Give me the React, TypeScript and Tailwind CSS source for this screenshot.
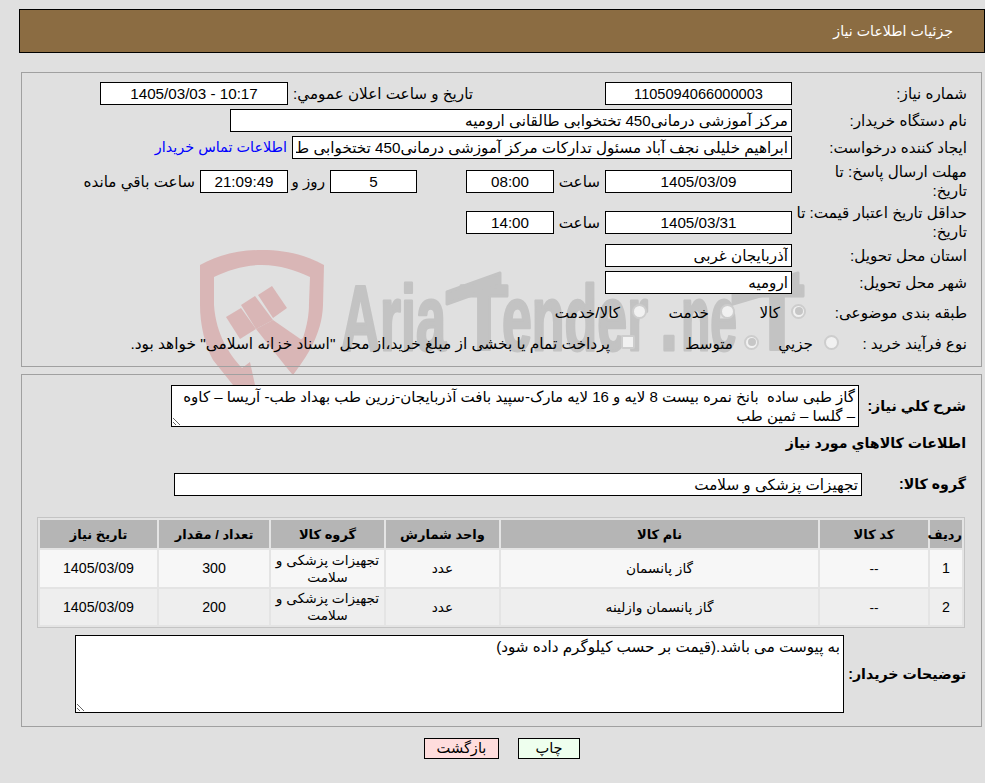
const inputBase =
  "h-[23px] shrink-0 border border-black bg-white px-[3px] text-[#000] outline-none";

function Box({ value, className }: { value: string; className: string }) {
  return <input readOnly dir="rtl" value={value} className={`${inputBase} ${className}`} />;
}

function Radio({ checked }: { checked?: boolean }) {
  return (
    <span className="mb-[2px] flex h-[15px] w-[15px] shrink-0 items-center justify-center rounded-full border-2 border-[#cdcdcd] bg-[#f1f1f1]">
      {checked && <span className="h-[8px] w-[8px] rounded-full bg-[#c6c6c6]" />}
    </span>
  );
}

// pieces of the wordmark: [text, x, width]
const wordmark: [string, number, number][] = [
  ["Aria", 341, 105],
  ["T", 460, 48],
  ["ender", 502, 146],
  [".", 660, 18],
  ["ne", 681, 56],
  ["T", 750, 54],
];

function Watermark() {
  return (
    <svg className="absolute left-0 top-0 z-0" width="985" height="783" viewBox="0 0 985 783">
      <g fill="#d9b6b6">
        <path d="M200 265 C220 254 240 250 262 250 C284 250 304 254 324 265 L323 305 C322 335 306 358 293 375 L278 355 L303 338 C307 325 309 315 309 303 L310 277 C295 270 280 265 262 265 C244 265 229 270 214 277 L214 305 C216 335 230 355 242 368 L250 362 L255 385 L233 385 L213 360 C205 345 200 325 200 305 Z" />
        <polygon points="226,317 241,308 256,329 240,339" />
        <polygon points="241,305 255,296 273,320 256,329" />
        <polygon points="258,295 272,286 287,308 273,318" />
        <polygon points="256,329 273,320 309,345 293,375 287,368" />
      </g>
      <g fill="#c3c3c3" stroke="#c3c3c3" strokeWidth="3" strokeLinejoin="round">
        {wordmark.map(([label, x, width]) => (
          <text
            key={x}
            x={x}
            y="350"
            direction="ltr"
            textLength={width}
            lengthAdjust="spacingAndGlyphs"
            fontFamily="'Liberation Sans', sans-serif"
            fontWeight="700"
            fontSize="92"
          >
            {label}
          </text>
        ))}
        <polygon points="447,292 500,273 500,285 447,304" />
        <polygon points="733,292 798,273 798,285 733,304" />
      </g>
    </svg>
  );
}

const rows = [
  { id: "1", name: "گاز پانسمان", qty: "300" },
  { id: "2", name: "گاز پانسمان وازلینه", qty: "200" },
];

export default function App() {
  return (
    <div
      dir="rtl"
      className="relative h-[783px] w-[985px] overflow-hidden bg-[#e0e0e0] text-[15.2px] leading-[19px] text-black [font-family:'Liberation_Sans','DejaVu_Sans',sans-serif]"
    >
      <Watermark />
      <div className="relative z-10">
        <div className="ml-[19px] mt-[9px] flex h-[44px] items-center border border-black bg-[#8b6c42] pr-[31px] text-[14.2px] text-white">
          جزئیات اطلاعات نیاز
        </div>

        <div className="ml-[21px] mr-[3px] mt-[19px] flex h-[295px] flex-col border border-[#a0a0a0] pr-[14px] pt-[9px]">
          <div className="flex h-[23px] items-center">
            <div className="w-[175px] shrink-0">شماره نیاز:</div>
            <Box value="1105094066000003" className="w-[187px] text-center text-[14.6px]" />
            <div className="mr-[132px] w-[185px] shrink-0">تاریخ و ساعت اعلان عمومي:</div>
            <Box value="10:17 - 1405/03/03" className="w-[188px] text-center" />
          </div>
          <div className="mt-[4px] flex h-[23px] items-center">
            <div className="w-[175px] shrink-0">نام دستگاه خریدار:</div>
            <Box value="مرکز آموزشی درمانی450 تختخوابی طالقانی ارومیه" className="w-[562px]" />
          </div>
          <div className="mt-[4px] flex h-[23px] items-center">
            <div className="w-[175px] shrink-0">ایجاد کننده درخواست:</div>
            <Box
              value="ابراهیم خلیلی نجف آباد مسئول تدارکات مرکز آموزشی درمانی450 تختخوابی طالقانی ارومیه"
              className="w-[500px]"
            />
            <a className="mr-[5px] whitespace-nowrap text-[14.4px] text-[#0000ff]">اطلاعات تماس خریدار</a>
          </div>
          <div className="mt-[3px] flex h-[38px] items-center">
            <div className="w-[175px] shrink-0 pl-[24px]">مهلت ارسال پاسخ: تا تاریخ:</div>
            <Box value="1405/03/09" className="w-[187px] text-center" />
            <div className="w-[51px] shrink-0 pr-[5px]">ساعت</div>
            <Box value="08:00" className="w-[88px] text-center" />
            <div className="w-[49px] shrink-0" />
            <Box value="5" className="w-[87px] text-center" />
            <div className="w-[42px] shrink-0 pr-[5px]">روز و</div>
            <Box value="21:09:49" className="w-[88px] bg-[#ffffee] text-center" />
            <div className="whitespace-nowrap pr-[5px]">ساعت باقي مانده</div>
          </div>
          <div className="mt-[3px] flex h-[38px] items-center">
            <div className="w-[175px] shrink-0">حداقل تاریخ اعتبار قیمت: تا تاریخ:</div>
            <Box value="1405/03/31" className="w-[187px] text-center" />
            <div className="w-[51px] shrink-0 pr-[5px]">ساعت</div>
            <Box value="14:00" className="w-[88px] text-center" />
          </div>
          <div className="mt-[3px] flex h-[23px] items-center">
            <div className="w-[175px] shrink-0">استان محل تحویل:</div>
            <Box value="آذربایجان غربی" className="w-[187px]" />
          </div>
          <div className="mt-[4px] flex h-[23px] items-center">
            <div className="w-[175px] shrink-0">شهر محل تحویل:</div>
            <Box value="ارومیه" className="w-[187px]" />
          </div>
          <div className="mt-[6px] flex h-[24px] items-center">
            <div className="w-[161px] shrink-0">طبقه بندی موضوعی:</div>
            <Radio checked />
            <div className="w-[56px] shrink-0 pr-[11px]">کالا</div>
            <Radio />
            <div className="w-[73px] shrink-0 pr-[11px]">خدمت</div>
            <Radio />
            <div className="whitespace-nowrap pr-[12px]">کالا/خدمت</div>
          </div>
          <div className="mt-[7px] flex h-[24px] items-center">
            <div className="w-[128px] shrink-0">نوع فرآیند خرید :</div>
            <Radio />
            <div className="w-[65px] shrink-0 pr-[11px]">جزيي</div>
            <Radio checked />
            <div className="w-[109px] shrink-0 pr-[11px]">متوسط</div>
            <span className="mb-[2px] h-[14px] w-[14px] shrink-0 rounded-[2px] border-2 border-[#cdcdcd] bg-[#f1f1f1]" />
            <div className="whitespace-nowrap pr-[11px] text-[15.4px]">
              پرداخت تمام يا بخشی از مبلغ خرید،از محل "اسناد خزانه اسلامی" خواهد بود.
            </div>
          </div>
        </div>

        <div className="ml-[21px] mr-[3px] mt-[7px] flex h-[353px] flex-col border border-[#a0a0a0] pr-[15px] pt-[10px]">
          <div className="flex items-center">
            <div className="w-[107px] shrink-0 text-[14.2px] font-bold">شرح کلي نیاز:</div>
            <textarea
              readOnly
              dir="rtl"
              className="h-[42px] w-[688px] resize border border-black bg-white px-[3px] py-[1px] text-[15px] outline-none"
              value="گاز طبی ساده  بانخ نمره بیست 8 لایه و 16 لایه مارک-سپید بافت آذربایجان-زرین طب بهداد طب- آریسا – کاوه – گلسا – ثمین طب"
            />
          </div>
          <div className="mt-[7px] h-[19px] text-[14.2px] font-bold">اطلاعات کالاهاي مورد نیاز</div>
          <div className="mt-[20px] flex h-[23px] items-center">
            <div className="w-[104px] shrink-0 text-[14.2px] font-bold">گروه کالا:</div>
            <Box value="تجهیزات پزشکی و سلامت" className="w-[688px]" />
          </div>
          <table className="ml-[15px] mr-0 mt-[21px] w-[928px] table-fixed border-separate border-spacing-[2px] self-end border border-[#c4c4c4] bg-[#e4e4e4] text-center text-[13.7px]">
            <thead>
              <tr className="h-[28px] bg-[#b5b5b5] text-[13px] font-bold">
                <th className="w-[32px] p-0">ردیف</th>
                <th className="w-[108px] p-0">کد کالا</th>
                <th className="w-[317px] p-0">نام کالا</th>
                <th className="w-[113px] p-0">واحد شمارش</th>
                <th className="w-[113px] p-0">گروه کالا</th>
                <th className="w-[110px] p-0">تعداد / مقدار</th>
                <th className="p-0">تاریخ نیاز</th>
              </tr>
            </thead>
            <tbody>
              {rows.map((row, i) => (
                <tr key={row.id} className={i === 0 ? "h-[37px] bg-[#f7f7f7]" : "h-[36px] bg-[#eeeeee]"}>
                  <td className="p-0 text-[14.2px]">{row.id}</td>
                  <td className="p-0">--</td>
                  <td className="p-0">{row.name}</td>
                  <td className="p-0">عدد</td>
                  <td className="p-0 leading-[17px]">تجهیزات پزشکی و سلامت</td>
                  <td className="p-0 text-[14.2px]">{row.qty}</td>
                  <td className="p-0 text-[14.2px]">1405/03/09</td>
                </tr>
              ))}
            </tbody>
          </table>
          <div className="mt-[7px] flex items-center">
            <div className="w-[122px] shrink-0 text-[14.2px] font-bold">توضیحات خریدار:</div>
            <textarea
              readOnly
              dir="rtl"
              className="h-[78px] w-[769px] resize border border-black bg-white px-[3px] py-[1px] outline-none"
              value="به پیوست می باشد.(قیمت بر حسب کیلوگرم داده شود)"
            />
          </div>
        </div>

        <div className="mt-[11px] flex justify-center gap-[19px] pl-[19px] text-[14.6px]">
          <button className="h-[21px] w-[62px] border border-black bg-[#eeffee]">چاپ</button>
          <button className="h-[21px] w-[75px] border border-black bg-[#ffdddd]">بازگشت</button>
        </div>
      </div>
    </div>
  );
}
